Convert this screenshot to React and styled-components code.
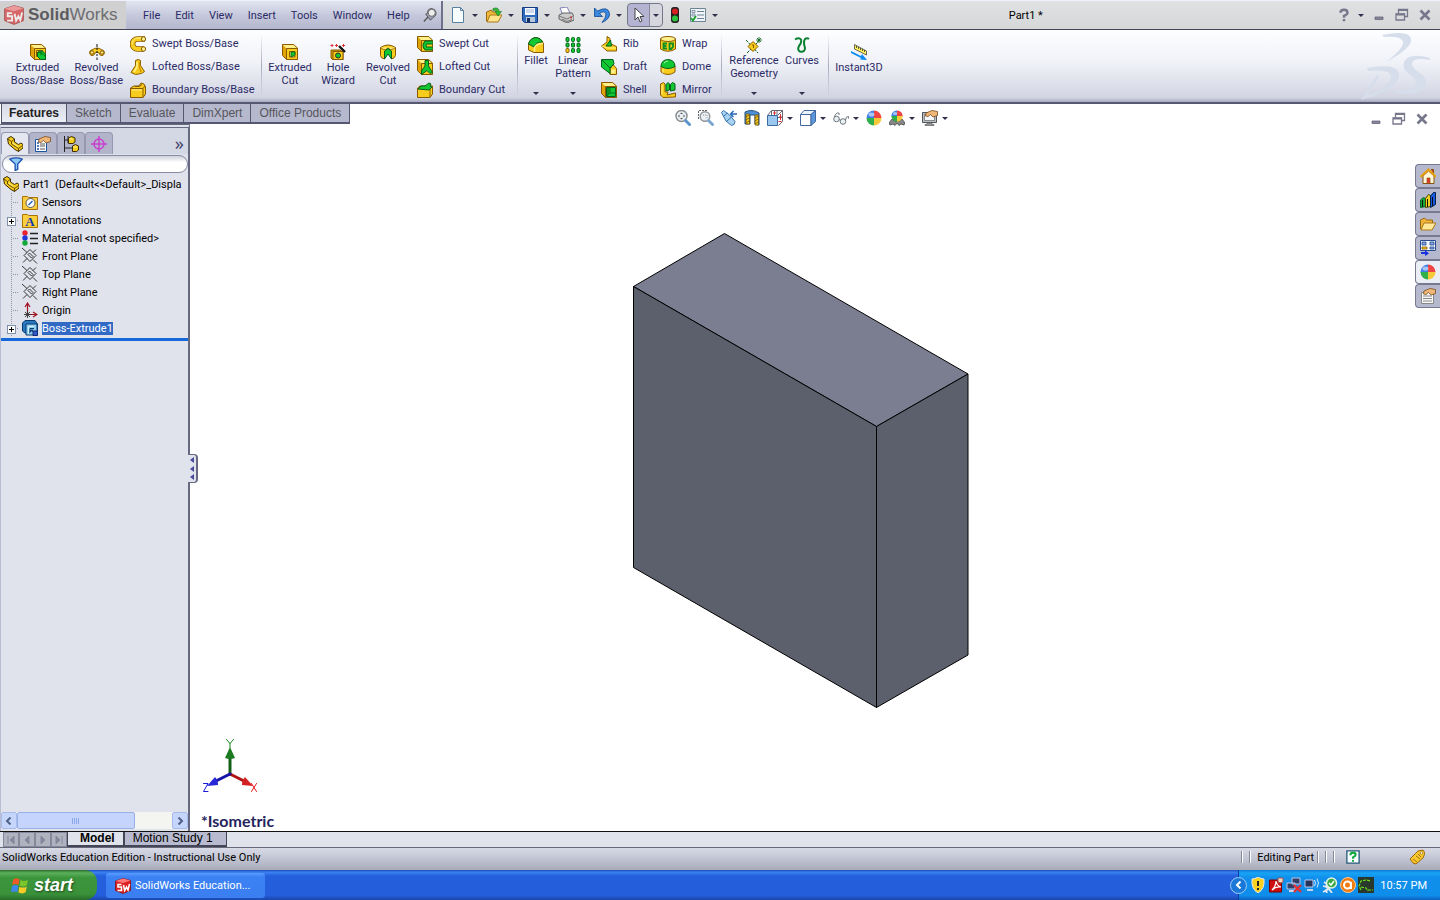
import React from 'react';
import styled, { createGlobalStyle, css } from 'styled-components';

const GlobalStyle = createGlobalStyle`
  * { box-sizing: border-box; }
  body {
    margin: 0;
    background: #fff;
    font-family: Tahoma, Roboto, sans-serif;
    font-size: 11px;
    line-height: 13px;
    color: #000;
  }
  button, input {
    font: inherit;
    color: inherit;
    padding: 0;
    margin: 0;
    border: none;
    background: none;
  }
  button { cursor: pointer; white-space: nowrap; }
  svg { display: block; flex: none; }
`

const Y = '#f8cc1c';
const L = '#fff08a';
const O = '#8a5a00';
const G = '#12c832';
const D = '#04601a';

const goldBox = (
  <>
    <path d="M.5.500h11l4 3.500v11.500H4.500l-4-4z" fill="#e0a408" stroke={O} />
    <path d="M1 1h10.500l3 3H4z" fill={L} />
    <path d="M4.500 4.500h11v11H4.500z" fill={Y} stroke={O} />
  </>
);

const sphere = (
  <>
    <path d="M8 8V0.500A7.500 7.500 0 0 0 .5 8z" fill="#3f7fe8" />
    <path d="M8 8V.5A7.500 7.500 0 0 1 15.500 8z" fill="#ee4444" />
    <path d="M8 8H.5A7.500 7.500 0 0 0 8 15.500z" fill="#2fb04a" />
    <path d="M8 8h7.500A7.500 7.500 0 0 1 8 15.500z" fill="#f6c93a" />
    <ellipse cx="5.500" cy="4.500" rx="3" ry="2" fill="#fff" opacity=".55" />
  </>
);

const hand = (
  <path d="M4 3l6-2.500 5.500 1v4L11 7 8.500 4.500 6 6.500 3.500 6z" fill="#f0b878" stroke="#7a4c20" strokeWidth=".8" />
);

const glyphs = {
  extrude: (
    <>
      {goldBox}
      <path d="M6.500 6.500h6v6h-6z" fill="none" stroke={O} />
      <path d="M7.500 8.500l2-1.500h3l3 3v5.500h-5l-3-3z" fill={G} stroke={D} />
      <path d="M7.500 8.500h3.500l4 3.500M11 8.500v3" fill="none" stroke={D} strokeWidth=".8" />
    </>
  ),
  revolve: (
    <>
      <path d="M8 0v3M8 13.500V16" stroke="#111" />
      <path d="M3 11.500C-.5 11 0 6 3 6q5-4 10 0c3 0 3.500 5 0 5.500q-2 .5-3-2.500-2-1.500-4 0-1 3-3 2.500z" fill={Y} stroke={O} />
      <circle cx="3" cy="8.500" r="1.700" fill={L} stroke={O} />
      <circle cx="13" cy="8.500" r="1.700" fill={L} stroke={O} />
      <path d="M8 4v2M8 7v2M8 10v2" stroke="#111" />
    </>
  ),
  sweep: (
    <>
      <path d="M15 3H7.500a5 5 0 0 0 0 10H14" fill="none" stroke={O} strokeWidth="5.600" />
      <path d="M14 3H7.500a5 5 0 0 0 0 10H14" fill="none" stroke={Y} strokeWidth="4" />
      <path d="M13 2H7.500a6 6 0 0 0-5.500 6" fill="none" stroke={L} />
      <circle cx="13.500" cy="3" r="2.200" fill={L} stroke={O} />
      <circle cx="13.500" cy="13" r="2.200" fill={L} stroke={O} />
    </>
  ),
  loft: (
    <>
      <path d="M5.500 1.500q3-2 5 0v5l4 6-3 2-6 1L1 13.500l4.500-7z" fill={Y} stroke={O} />
      <path d="M7 3v5l-3 5" fill="none" stroke={L} strokeWidth="1.500" />
      <path d="M9.500 3v5l1.500 5" fill="none" stroke="#cf9400" strokeWidth="1.500" />
    </>
  ),
  boundary: (
    <>
      <path d="M.5 6L4 4h5l2-3 3 1 1.500 3v7L13 15.500H.5z" fill={Y} stroke={O} />
      <path d="M1 6.500h12l2-2.500M13 6.500v9M5 4.500q5 1 7-2" fill="none" stroke={O} />
      <path d="M2 8h10" stroke={L} />
    </>
  ),
  extrudeCut: (
    <>
      {goldBox}
      <path d="M7.500 7.500h5.500v5.500H7.500z" fill={L} stroke={O} />
      <path d="M9 8h4v3L9 13z" fill={G} stroke={D} strokeWidth=".8" />
    </>
  ),
  hole: (
    <>
      <path d="M1 6h9l3 2v8H3L1 14z" fill="#d89a00" stroke={O} />
      <path d="M3 7.500h10v8H3z" fill={Y} stroke={O} />
      <circle cx="8" cy="11.500" r="2.500" fill={G} stroke="#333" />
      <path d="M9 2l6 6" stroke="#111" strokeWidth="2.400" />
      <path d="M2 0v3M.5 1.500h3M6.500 0v3M5 1.500h3M13.500 0v3M12 1.500h3" stroke="#e02020" strokeWidth=".9" />
    </>
  ),
  revolveCut: (
    <>
      <path d="M.5 3.500Q8-1.500 15.500 3.500v8q-1 3-4 3.500V9L8 5 4.500 9v6q-4-1-4-3.500z" fill={Y} stroke={O} />
      <path d="M.5 3.500Q3 6 5.500 5.500L8 4l2.500 1.500q3 0 5-2" fill={L} stroke={O} strokeWidth=".8" />
      <path d="M4.500 15V7L8 4.500l3.500 2.500v8L8 10z" fill={G} stroke={D} />
    </>
  ),
  sweepCut: (
    <>
      {goldBox}
      <path d="M15.500 6.500H9q-3 3 0 6h6.500" fill="none" stroke={D} strokeWidth="4" />
      <path d="M15.500 6.500H9q-3 3 0 6h6.500" fill="none" stroke={G} strokeWidth="2.200" />
    </>
  ),
  loftCut: (
    <>
      {goldBox}
      <path d="M8 1.500h3.500V7l4 6.500-2.500 1-3-3-5.500 4V12l3.500-5z" fill={G} stroke={D} />
    </>
  ),
  boundaryCut: (
    <>
      <path d="M.5 6L3 4h12.500v8L13 15.500H.5z" fill={Y} stroke={O} />
      <path d="M13 7v8" stroke={O} />
      <path d="M1 7l3-3h4l4-3 2 1-1 2 2 1-3 3z" fill={G} stroke={D} />
    </>
  ),
  fillet: (
    <>
      <path d="M.5 7v6L6 15.500h9.500V7q-1-5-7-6.500Q2 1 .5 7z" fill={Y} stroke={O} />
      <path d="M.5 7Q2 1 8 .5q5 .5 6.500 4.500Q8 5 6 10z" fill={G} stroke={D} />
      <path d="M6.500 15V10.500q2-4 8.500-4" fill="none" stroke={L} strokeWidth="1.500" />
    </>
  ),
  pattern: (
    <>
      {[1, 6.500, 12].map(x => [0.500, 6, 11.500].map(y => (
        <rect key={`${x}-${y}`} x={x} y={y} width="3" height="4" rx="1"
          fill={x === 1 && y > 11 ? Y : G} stroke={x === 1 && y > 11 ? O : D} />
      )))}
    </>
  ),
  rib: (
    <>
      <path d="M6 .5l3 2v5l6.500 3v4.500H6L.5 10 6 6z" fill={Y} stroke={O} />
      <path d="M5 10L9.500 4l1 6z" fill={G} stroke={D} />
      <path d="M1 10l5 2h9" fill="none" stroke={L} />
    </>
  ),
  draft: (
    <>
      <path d="M9 9.500l3-4 3.500 4v6H9z" fill={Y} stroke={O} />
      <path d="M.5.500H12l1 4-4 5v5L.5 8z" fill={G} stroke={D} />
      <path d="M1 1l8 8 4-4" fill="none" stroke={D} />
      <path d="M10 10.500h4.500v4H10z" fill={L} />
    </>
  ),
  shell: (
    <>
      {goldBox}
      <path d="M5.500 5.500h9v9h-9z" fill={G} stroke={D} />
      <path d="M6 14l3-3h5.500M9 11V6" fill="none" stroke={D} strokeWidth=".8" />
      <path d="M6 6h3v5l-3 3z" fill="#0a9022" />
    </>
  ),
  wrap: (
    <>
      <path d="M.5 3v10Q8 17.500 15.500 13V3z" fill={Y} stroke={O} />
      <ellipse cx="8" cy="3" rx="7.500" ry="2.500" fill={L} stroke={O} />
      <path d="M7 7.500H3.500v5H7M3.500 10h3M9.500 13V7.500H13V11l-2 2z" fill="none" stroke="#0a9022" strokeWidth="1.800" />
    </>
  ),
  dome: (
    <>
      <path d="M1 7v6q7 5 14 0V7z" fill={Y} stroke={O} />
      <path d="M1 7.500q0-6.500 7-7Q15 1 15 7.500q-7 4-14 0z" fill={G} stroke={D} />
      <path d="M4 4q2-2 4-2" stroke="#afa" fill="none" />
      <path d="M3 10v4" stroke={L} />
    </>
  ),
  mirror: (
    <>
      <path d="M.5 2l3-1.500L5 2v8h3l-1 3 8.500-2v4L3 15.500.5 13z" fill={Y} stroke={O} />
      <path d="M6 2.500l2-2 1.500 1.500v6L6 9zM10.500 2.500l2-2L15 2v6l-4.500 1z" fill={G} stroke={D} />
      <path d="M2 3v9" stroke={L} />
    </>
  ),
  refGeometry: (
    <>
      <path d="M0 3l12 13M1 16L13 4" stroke="#086018" strokeDasharray="3 1" />
      <path d="M13 0v6M10 3h6M11 1l4 4M15 1l-4 4" stroke="#086018" strokeWidth=".8" />
      <path d="M7 4.500l5 5-5 5-5-5z" fill={Y} stroke={O} />
      <path d="M6 8h1.500v3" stroke={O} fill="none" />
    </>
  ),
  curves: <path d="M1 2.500q4-2.500 6 0 1 3-2 6.500-2 4 1 5.500 5 1 5-3.500-2-6 0-9 2-1.500 4 0" fill="none" stroke="#078030" strokeWidth="2" />,
  instant: (
    <>
      <path d="M3.500 .5l12 6.500v4l-12-6z" fill="#fff25a" stroke="#444" strokeWidth=".8" />
      <path d="M5.500 2v2M7.500 3v2M9.500 4v2M11.500 5v2M13.500 6v2" stroke="#333" strokeWidth=".8" />
      <path d="M0 7l10 5 1-2 5 6-7-.5 1-1.500L0 9z" fill="#0a8cf0" />
    </>
  ),
  newDoc: <path d="M2.500.5h8l3 3v12h-11zM10.500.5v3h3" fill="#f7fcff" stroke="#5880a0" />,
  open: (
    <>
      <path d="M.5 14V5l5-2 1 2h5v9z" fill="#f0b83a" stroke="#9a6810" />
      <path d="M1 15l3-7h12l-4 7z" fill="#ffe38a" stroke="#a87818" />
      <path d="M7 1.500q6-2 6 3h2.500L12 9 9 4.500h2q-1-2-4-1z" fill="#30b838" stroke="#187818" strokeWidth=".6" />
    </>
  ),
  save: (
    <>
      <path d="M.5.5h15v15h-13l-2-2z" fill="#2f6cc0" stroke="#143a80" />
      <path d="M3 1h10v7H3z" fill="#f4f8ff" />
      <path d="M4 3h8M4 5h8" stroke="#a8b8d8" />
      <path d="M4 10h9v5H4z" fill="#b8c4d8" />
      <path d="M5 11h3v4H5z" fill="#16305e" />
    </>
  ),
  print: (
    <>
      <path d="M2 1l7-1 3 6-7 2z" fill="#fff" stroke="#66a" strokeWidth=".8" />
      <path d="M1 8l4-2 9 0 2 3v4l-7 3-8-4z" fill="#ccc" stroke="#555" strokeWidth=".9" />
      <path d="M1 9l8 3 6-3M4 12l5 2.500 5-2" fill="none" stroke="#777" />
      <circle cx="13" cy="10.500" r="1" fill="#d03030" />
    </>
  ),
  undo: <path d="M.5 1v8.500h8L5.500 6.500q5-3.500 6.500.5 0 4-4 8.500Q16 12 15.500 6.500 14-1.500 3.500 4z" fill="#3a88e0" stroke="#10468c" strokeWidth=".8" />,
  cursor: <path d="M4 1v12l3-3 2 5 2-1-2-4.500h4z" fill="#fff" stroke="#444" />,
  light: (
    <>
      <rect x="4" y="0" width="8" height="16" rx="3" fill="#222" />
      <circle cx="8" cy="4.500" r="3" fill="#d82020" />
      <circle cx="8" cy="11.500" r="3" fill="#2cc43c" />
    </>
  ),
  options: (
    <>
      <path d="M.5 1.500h15v13H.5z" fill="#eef4f8" stroke="#6c8494" />
      <path d="M7 4.500h7M7 8h7M7 11.500h7" stroke="#6c8494" />
      <path d="M2 3.500h3v2H2zM2 7h3v2H2z" fill="none" stroke="#6c8494" strokeWidth=".8" />
      <path d="M1 11l2 2.500L6 9" fill="none" stroke="#18a028" strokeWidth="1.800" />
    </>
  ),
  pin: (
    <>
      <path d="M1 15.500l5-5.500" stroke="#555" strokeWidth="1.500" />
      <path d="M3 7l5.500 7 3-3q4-2 3.500-6-1-4.500-6-4.500Q5 1 5 6z" fill="#9a9ab0" stroke="#555" />
      <circle cx="10" cy="5.500" r="4" fill="#eee" stroke="#666" />
    </>
  ),
  zoomFit: (
    <>
      <circle cx="6.500" cy="6" r="5.500" fill="#e8eef2" stroke="#858b90" strokeWidth="1.400" />
      <path d="M6.500 2.500l1.500 1.500H5zM6.500 9.500L8 8H5zM3 6l1.500-1.500v3zM10 6L8.500 4.500v3z" fill="#555" />
      <path d="M10.500 10.500l4 4" stroke="#5b95cc" strokeWidth="3" strokeLinecap="round" />
    </>
  ),
  zoomArea: (
    <>
      <path d="M.5 9V.5H10" fill="none" stroke="#666" strokeDasharray="2 1" />
      <circle cx="7" cy="6.500" r="4.800" fill="#e8eef2" stroke="#90969a" strokeWidth="1.400" />
      <path d="M5 5h4v3" fill="none" stroke="#999" strokeDasharray="1 1" />
      <path d="M10.500 10.500l4 4" stroke="#7aa6d0" strokeWidth="3" strokeLinecap="round" />
    </>
  ),
  prevView: (
    <>
      <path d="M.5 2.500l2-2 6 4.500 5.500 6.500q0 3.500-3.500 4L5 11z" fill="#a8d4f4" stroke="#3a70a8" />
      <path d="M3 6l3.500-3M6 11l4.500-4" stroke="#3a70a8" />
      <path d="M16 4h-5.500M12.500 1L9.500 4l3 3" fill="none" stroke="#2468b8" strokeWidth="1.400" />
    </>
  ),
  section: (
    <>
      <path d="M1 2q7-3.500 14 1v12q-2 0-4-1V5H6v9H1z" fill="#4c90d8" stroke="#24507c" />
      <path d="M2 4h3.500v10H2zM11 5h3.500v10H11z" fill={Y} stroke="#6a5010" strokeWidth=".8" />
      <path d="M2 7l3-2M2 10l3-2M2 13l3-2M11 8l3-2M11 11l3-2M11 14l3-2" stroke="#6a5010" strokeWidth=".8" />
    </>
  ),
  orient: (
    <>
      <path d="M4.500.5h11v11l-4 4M4.500.5l-4 5M15.500.5L11 5M4.500 1v4M10 .5V5M11 7.500h4" fill="none" stroke="#556" strokeWidth=".9" />
      <path d="M.5 5.500h10v10H.5z" fill="#9cc8f0" stroke="#3a6ca0" />
      <path d="M7.500 1v4M6 3h3M13.500 4v6M12 7h3M11.500 11.500h3" stroke="#d83030" />
    </>
  ),
  display: (
    <>
      <path d="M.5 4.500L4 .5h11.500L11 4.500z" fill="#eaf4fc" stroke="#4468a0" />
      <path d="M.5 4.500H11v11H.5z" fill="#fff" stroke="#4468a0" />
      <path d="M11 4.500l4.500-4v11l-4.500 4z" fill="#5c98dc" stroke="#4468a0" />
    </>
  ),
  glasses: (
    <>
      <circle cx="3.500" cy="9" r="2.800" fill="#e8f0f4" stroke="#707880" />
      <circle cx="10" cy="11.500" r="2.800" fill="#e8f0f4" stroke="#707880" />
      <path d="M6 9.500l2 1M1.500 7q1-4.500 4.500-4v2M12.500 10q.5-4 3-3.500v2" fill="none" stroke="#707880" />
    </>
  ),
  appearance: sphere,
  scene: (
    <>
      <path d="M0 13l3-4 3 2 4 0 3-2 3 4-1 2-3-1-2 1.500-2-2.500-2 2.500L4 14l-3 1z" fill="#888" stroke="#444" strokeWidth=".8" />
      <g transform="translate(2 0) scale(.75)">{sphere}</g>
    </>
  ),
  viewSettings: (
    <>
      <path d="M.5 2.500h14v10H.5z" fill="#b8bec6" stroke="#555" />
      <path d="M2.500 4.500h10v6h-10z" fill="#f4f8fc" stroke="#666" strokeWidth=".7" />
      <path d="M5 13h5v1.500h2v1H3v-1h2z" fill="#999" stroke="#666" strokeWidth=".7" />
      {hand}
    </>
  ),
  part: (
    <>
      <path d="M.5 2.500L4 .5l3.500 2.500v3l4 2.500L14 7l2 1.500V12l-4.500 3.500L8 13.500 1.500 8z" fill={Y} stroke="#3c2c00" />
      <path d="M1 3l3.500 2.500L7.500 3M4.500 5.500V8l7 4.500 4-3M11.500 12.500v3" fill="none" stroke="#3c2c00" strokeWidth=".8" />
      <path d="M5.500 7l5 3.500" stroke={L} />
    </>
  ),
  property: (
    <>
      <path d="M.5 3.500h11v12H.5z" fill="#fff" stroke="#1c54a0" />
      <path d="M2 7h2M2 10h2M2 13h2" stroke="#1c54a0" strokeWidth="1.500" />
      <path d="M5 8h5M5 10h5M5 13h5" stroke="#555" />
      {hand}
    </>
  ),
  config: (
    <>
      <path d="M1.500 0v16M1.500 4H5M1.500 12H9M5 0v7" fill="none" stroke="#222" />
      <path d="M5.500 2l3-1.500 3.500 1.500v4l-2 1.500H5.500zM9.500 10l3-1.500 3 1.500v4l-2 1.500h-4z" fill={Y} stroke="#3c2c00" />
      <path d="M6 3h4M10 11h4" stroke={L} />
    </>
  ),
  dimx: (
    <>
      <circle cx="8" cy="8" r="5" fill="none" stroke="#c840d0" strokeWidth="1.500" />
      <path d="M8 0v16M0 8h16" stroke="#c840d0" strokeWidth="1.500" />
    </>
  ),
  filter: <path d="M1 2.500q7-3 14 0L10 8v6l-3 1.500V8z" fill="#8cc8f4" stroke="#1c50b0" strokeWidth="1.500" />,
  sensors: (
    <>
      <path d="M.5 2.500h5l1 1h9v12H.5z" fill="#f8cc3c" stroke="#a87408" />
      <circle cx="8.500" cy="9" r="4.500" fill="#fff" stroke="#555" />
      <path d="M6.500 11l4-4" stroke="#2060c0" strokeWidth="1.500" />
    </>
  ),
  annotations: (
    <>
      <path d="M.5 2.500h5l1 1h9v12H.5z" fill="#fccf3c" stroke="#a87408" />
      <text x="8" y="13.500" textAnchor="middle" fontFamily="Liberation Serif, serif" fontWeight="bold" fontSize="13" fill="#1038b0">A</text>
    </>
  ),
  material: (
    <>
      <path d="M8 3.500h8M8 8.500h8M8 13.500h8" stroke="#222" strokeWidth="1.300" />
      <circle cx="3" cy="3" r="2.700" fill="#e82030" />
      <circle cx="3" cy="8" r="2.700" fill="#2038d8" />
      <circle cx="3" cy="13" r="2.700" fill="#10a838" />
    </>
  ),
  plane: (
    <path d="M8 1.500l6 6-6 6-6-6zM0 0l5 4.500M11 11.500l4 4M1 14.500l4-4M11 4.500l3-3M7.500 5l3.500 3.500-1.500 1.500L6 6.500z" fill="none" stroke="#222" strokeWidth=".9" />
  ),
  origin: (
    <>
      <path d="M5.500 12V2M3 5l2.500-4L8 5M7 12.500h7M11 10l4 2.500-4 2.500" fill="none" stroke="#a01020" strokeWidth="1.200" />
      <path d="M3 10l5 5M8 10l-5 5M5.500 9v7M2 12.500h7" stroke="#333" strokeWidth=".9" />
    </>
  ),
  boss: (
    <>
      <path d="M.5 3L3 .5h10L15.500 4v9H3L.5 11z" fill="#2a78c0" stroke="#0a3a70" />
      <path d="M4 4h11v11H4z" fill="#8ccdf0" stroke="#0a3a70" />
      <path d="M6.500 14V6.500H12" fill="none" stroke="#d8f0fc" />
      <path d="M8 8.500V12l2-2 3 4M8 8.500h4" fill="none" stroke="#0a3a70" strokeWidth="1.200" />
      <path d="M11 11h4.500v4.500H11z" fill="#3458d0" stroke="#102a70" />
    </>
  ),
  home: (
    <>
      <path d="M3 8v7.500h11V8L8.500 3z" fill="#fff8d8" stroke="#85520a" />
      <path d="M11 1.500h2.500V6" fill="#d83a2a" stroke="#85520a" />
      <path d="M.5 9l8-7.500 7.500 7.500" fill="none" stroke="#e8a010" strokeWidth="2" />
      <path d="M7 10h3v5.500H7z" fill="#ea3a30" stroke="#85520a" strokeWidth=".7" />
    </>
  ),
  library: (
    <>
      <path d="M.5 8l3-2.500 2 1v8l-5 1z" fill="#18a838" stroke="#062" />
      <path d="M5.500 6.500l3-4 2 1v11l-5 1z" fill="#f4d020" stroke="#440" />
      <path d="M10.500 4l3-3.500h2v12l-5 3z" fill="#1858e0" stroke="#024" />
      <path d="M2.500 8v7M7.500 7v8M12.500 5v9" stroke="#111" />
    </>
  ),
  folder: (
    <>
      <path d="M.5 13V4l4-2 2 2h6v9z" fill="#f0b43c" stroke="#9a6810" />
      <path d="M1 14l3-7h12l-4 7z" fill="#ffe89a" stroke="#a87818" />
    </>
  ),
  palette: (
    <>
      <path d="M.5.5h15v10H.5z" fill="#f4f8ff" stroke="#2c4c90" />
      <path d="M2 2h4v3H2zM10 2h4v3h-4zM10 7h4v2h-4z" fill="#7ca4e0" stroke="#2c4c90" strokeWidth=".8" />
      <path d="M2 7h5v2H2z" fill={Y} stroke={O} strokeWidth=".8" />
      <path d="M1 12h4v-2l4 3.500L5 16v-2H1z" fill="#1830e0" />
    </>
  ),
  custom: (
    <>
      <path d="M1.500 4.500h12v11h-12z" fill="#f8f8f8" stroke="#888" />
      <path d="M3 8h9M3 10.500h9M3 13h9" stroke="#888" />
      {hand}
    </>
  ),
  sw: (
    <>
      <path d="M.5 3L8 .5l7.500 2v10L8 15.500l-7.500-3z" fill="#d22" stroke="#800" strokeWidth=".7" />
      <path d="M.5 3L8 .5l7.500 2L8 5z" fill="#f77" />
      <path d="M6.500 6.500H3V9h3.500v3.500H2.500M8.500 7l1.200 5.500L11.500 9l1.500 3L14.500 6" fill="none" stroke="#fff" strokeWidth="1.500" />
    </>
  ),
  helpBox: (
    <>
      <path d="M1 1h14v14H1z" fill="#f4fcff" stroke="#285878" strokeWidth="1.500" />
      <path d="M5 6q0-3 3-3t3 2.500Q11 7 8 8.500V10M8 11.500v2" fill="none" stroke="#10a838" strokeWidth="2.300" />
    </>
  ),
  tag: (
    <>
      <path d="M1 10l8-8 5-1 2 3-2 5-7 6-3-1z" fill="#fac830" stroke="#9a6808" />
      <path d="M4 10l4 3M7 7l4 3M9 5l3 3" stroke="#9a6808" strokeWidth=".9" />
      <circle cx="12.500" cy="4" r="1.300" fill="#fff" stroke="#9a6808" strokeWidth=".7" />
    </>
  ),
  shield: (
    <>
      <path d="M8 0q3 2 6 2 1 10-6 14Q1 12 2 2q3 0 6-2z" fill="#f8d020" stroke="#e8e8e8" />
      <path d="M8 4v5M8 11v2" stroke="#222" strokeWidth="2" />
    </>
  ),
  acrobat: (
    <>
      <path d="M1.500 3h12v12h-12z" fill="#d01010" stroke="#700" />
      <path d="M4 13q4-4 4-9 1 5 5 6-5-1-9 3z" fill="none" stroke="#fff" strokeWidth="1.200" />
      <path d="M10 1h5v4l-2 1-3-1z" fill="#f4d8c0" stroke="#955" />
    </>
  ),
  netOff: (
    <>
      <path d="M6 1h8v6H6zM1 6h8v6H1z" fill="#34406c" stroke="#b8c8e8" />
      <path d="M3 14h5" stroke="#c8d4ec" strokeWidth="2" />
      <path d="M8 8l7 7M15 8l-7 7" stroke="#e83030" strokeWidth="2.400" />
    </>
  ),
  wireless: (
    <>
      <path d="M1 3h8v7H1z" fill="#26345c" stroke="#b8c8e8" />
      <path d="M3 13h6" stroke="#c8d4ec" strokeWidth="2" />
      <path d="M10.500 3q2 3 0 6M13 1.500q3 4.500 0 9" fill="none" stroke="#d8ecff" />
    </>
  ),
  update: (
    <>
      <path d="M2 5l3 2-1 3 3 1-3 2 1 3M1 9l4 1M1 15l6-3 3 4" fill="none" stroke="#e4e8ec" strokeWidth="1.800" />
      <circle cx="9.500" cy="6" r="5" fill="#38a840" stroke="#e4f4e4" strokeWidth="1.500" />
      <path d="M7 6l2 2 3-4" fill="none" stroke="#fff" strokeWidth="1.600" />
    </>
  ),
  avast: (
    <>
      <circle cx="8" cy="8" r="7.500" fill="#f07c10" stroke="#ffc890" />
      <circle cx="7.500" cy="8" r="3.500" fill="none" stroke="#fff" strokeWidth="2" />
      <path d="M11 5v7" stroke="#fff" strokeWidth="2" />
    </>
  ),
  trace: (
    <>
      <path d="M0 0h16v16H0z" fill="#28382c" />
      <path d="M3 13l-2-4 2-5 5-1 5 1M3 10l5 1 2 3M10 13h5" fill="none" stroke="#70e020" strokeWidth="1.200" strokeDasharray="3 1" />
    </>
  ),
  flag: (
    <>
      <path d="M2 3q3-2 5.500 0L6.500 8Q4 6 1 8z" fill="#f05a28" />
      <path d="M8.500 3.500q3 2 6.500 0l-1 5q-3 1.500-6.500 0z" fill="#7cc62c" />
      <path d="M1 9q3-2 5.500 0l-1 5.500Q3 13 0 14.500z" fill="#3c88f0" />
      <path d="M7.500 9.500q3 1.500 6.500 0l-1 5q-3 2-6.500 0z" fill="#fccb28" />
    </>
  ),
  help: <path d="M4 5.500Q4 2 8 2t4 3.500Q12 7.500 8 9v2M8 12.500V15" fill="none" stroke="#77778c" strokeWidth="2.800" />,
  min: <path d="M4 10h8v2.500H4z" fill="#88889c" stroke="#66667a" strokeWidth=".8" />,
  restore: (
    <>
      <path d="M4.500 6V2.500h9v7H11" fill="none" stroke="#77778c" strokeWidth="1.300" />
      <path d="M4 3h10" stroke="#77778c" strokeWidth="2" />
      <path d="M2 7h8.500v6H2z" fill="none" stroke="#77778c" strokeWidth="1.300" />
      <path d="M2 7.500h9" stroke="#77778c" strokeWidth="2" />
    </>
  ),
  close: <path d="M3.500 3.500l9 9M12.500 3.500l-9 9" stroke="#77778c" strokeWidth="2.600" />,
};

function Icon({ name, size = 16 }) {
  return <svg width={size} height={size} viewBox="0 0 16 16" aria-hidden="true">{glyphs[name]}</svg>;
}

const Caret = styled.span`
  width: 0;
  height: 0;
  border: 3px solid transparent;
  border-top-color: #30304c;
  border-bottom: none;
`

const Page = styled.div`
  display: flex;
  flex-direction: column;
  min-height: 100vh;
`

const TitleBar = styled.header`
  display: flex;
  height: 30px;
  border-top: 1px solid #eef0fc;
  border-bottom: 1px solid #444458;
  background: linear-gradient(#e0e1e3, #d6d7d9);
`

const Brand = styled.div`
  display: flex;
  align-items: center;
  gap: 4px;
  width: 126px;
  padding-left: 4px;
  background: #d0d0d1;
  color: #6c6c70;
  font-family: 'Liberation Sans', Arial, sans-serif;
  font-size: 17px;
  line-height: 20px;
  b { color: #5c5c60; }
  svg { opacity: 0.6; }
`

const MenuBar = styled.nav`
  display: flex;
  align-items: center;
  padding: 0 4px 0 10px;
  border-right: 2px solid #70708c;
  background: linear-gradient(#e2e4f0, #c6c9dc 50%, #b4b7cd);
  button {
    height: 28px;
    padding: 0 8px 0 7px;
    color: #2b2b66;
  }
  svg { margin-left: 5px; }
`

const QuickBar = styled.div`
  display: flex;
  align-items: center;
  padding-left: 4px;
`

const QuickButton = styled.button`
  display: flex;
  align-items: center;
  justify-content: ${p => (p.$plain ? 'center' : 'flex-start')};
  gap: 6px;
  width: ${p => (p.$plain ? 24 : 36)}px;
  height: 24px;
  padding-left: ${p => (p.$plain ? 0 : 3)}px;
  ${p => p.$active && css`
    border: 1px solid #77778c;
    border-radius: 4px;
    background: linear-gradient(90deg, #b4b4d2 21px, #88889c 21px, #88889c 22px, #d6d7de 22px);
  `}
`

const DocTitle = styled.div`
  flex: 1;
  display: flex;
  align-items: center;
  justify-content: center;
`

const WindowButtons = styled.div`
  display: flex;
  align-items: center;
  gap: 7px;
  padding: 0 ${p => p.$pad || 7}px 0 8px;
  button { display: flex; }
`

const RibbonBar = styled.section`
  display: flex;
  height: 74px;
  padding-left: 8px;
  border-bottom: 2px solid #555870;
  background: linear-gradient(#fdfeff, #f0f2f8 45%, #d2d4e2 94%, #a8abc0);
`

const Group = styled.div`
  display: flex;
  & + &::before {
    content: '';
    width: 1px;
    margin: 4px 5px;
    background: linear-gradient(transparent, #a8abc0 50%, transparent);
  }
`

const BigButton = styled.button`
  display: flex;
  flex-direction: column;
  align-items: center;
  width: ${p => p.$w}px;
  padding: ${p => (p.$menu ? '7px 0 7px' : '14px 0 0')};
  color: #2b2b66;
  white-space: pre-line;
  svg { margin-bottom: 1px; }
  ${Caret} { margin-top: auto; }
`

const SmallColumn = styled.div`
  display: flex;
  flex-direction: column;
  width: ${p => p.$w}px;
  padding: 2px 0 0 4px;
`

const SmallButton = styled.button`
  display: flex;
  align-items: center;
  gap: 6px;
  height: 23px;
  color: #2b2b66;
`

const DsLogo = styled.svg`
  margin: 2px 8px 0 auto;
`

const TabRow = styled.div`
  display: flex;
  align-items: flex-start;
  height: 20px;
`

const FeatureTabs = styled.div`
  display: flex;
  padding-left: 1px;
  font-family: 'Liberation Sans', Arial, sans-serif;
  font-size: 12px;
`

const FeatureTab = styled.button`
  height: 20px;
  padding: 0 ${p => (p.$active ? 7 : 8)}px;
  border: 1px solid #555870;
  border-width: 0 1px 2px;
  margin-left: -1px;
  background: ${p => (p.$active ? 'linear-gradient(#d8dae6, #eceef5)' : '#b6b9cd')};
  color: ${p => (p.$active ? '#222' : '#55555c')};
  font-weight: ${p => (p.$active ? 'bold' : 'normal')};
  &:first-child { margin-left: 0; }
`

const ViewTools = styled.div`
  flex: 1;
  display: flex;
  justify-content: center;
  padding: 6px 80px 0 0;
`

const ViewButton = styled.button`
  display: flex;
  align-items: center;
  gap: 4px;
  width: ${p => (p.$menu ? 33 : 23)}px;
  height: 16px;
`

const DocButtons = styled(WindowButtons)`
  padding-top: 7px;
`

const Workspace = styled.main`
  flex: 1;
  display: flex;
`

const SidePanel = styled.aside`
  position: relative;
  z-index: 1;
  display: flex;
  flex-direction: column;
  width: 190px;
  border-left: 1px solid #b8bcd0;
  border-right: 2px solid #66697f;
  border-top: 4px double #666a80;
  background: #e0e3ec;
`

const PanelTabs = styled.div`
  display: flex;
  height: 26px;
  padding: 4px 4px 0 0;
  background: #d4d7e4;
`

const PanelTab = styled.button`
  display: flex;
  align-items: center;
  justify-content: center;
  width: 28px;
  border: 1px solid #9598b0;
  border-bottom: none;
  border-radius: 4px 4px 0 0;
  background: ${p => (p.$active ? '#e4e6f0' : '#b2b5ca')};
`

const More = styled.button`
  margin-left: auto;
  font-family: 'Noto Sans', sans-serif;
  font-size: 18px;
  color: #44446a;
`

const FilterBox = styled.label`
  display: flex;
  align-items: center;
  gap: 4px;
  height: 18px;
  margin: 1px 0 2px 1px;
  padding-left: 6px;
  border: 1px solid #888ba4;
  border-radius: 9px;
  background: linear-gradient(#cfd1dc, #fff 40%);
  input { width: 100%; outline: none; }
`

const Tree = styled.ul`
  list-style: none;
  margin: 0;
  padding: 0 0 1px;
  border-bottom: 3px solid #1668d8;
`

const TreeRoot = styled.li`
  display: flex;
  align-items: center;
  gap: 4px;
  height: 18px;
  padding-left: 2px;
  white-space: pre;
`

const TreeItem = styled.li`
  display: flex;
  align-items: center;
  gap: 4px;
  height: 18px;
  white-space: nowrap;
`

const Branch = styled.span`
  position: relative;
  width: 17px;
  height: 18px;
  background:
    repeating-linear-gradient(#9094a8 0 1px, transparent 1px 2px) 10px 0 / 1px 18px no-repeat,
    repeating-linear-gradient(90deg, #9094a8 0 1px, transparent 1px 2px) 12px 9px / 7px 1px no-repeat;
`

const Expander = styled.button`
  position: absolute;
  left: 6px;
  top: 6px;
  width: 9px;
  height: 9px;
  border: 1px solid #8090a8;
  background:
    linear-gradient(#000, #000) center / 5px 1px no-repeat,
    linear-gradient(#000, #000) center / 1px 5px no-repeat,
    #fff;
`

const TreeLabel = styled.span`
  ${p => p.$selected && css`
    background: #316ac5;
    color: #fff;
  `}
`

const ScrollBar = styled.div`
  display: flex;
  height: 17px;
  margin: auto 0 2px;
  background: #f4f4f0;
`

const ScrollButton = styled.button`
  display: flex;
  align-items: center;
  justify-content: center;
  width: 16px;
  border: 1px solid #a8bcec;
  border-radius: 2px;
  background: #c6d5fc;
`

const ScrollThumb = styled.div`
  width: 118px;
  margin-right: auto;
  border: 1px solid #98b0e8;
  border-radius: 2px;
  background:
    repeating-linear-gradient(90deg, #8ca8e8 0 1px, transparent 1px 2px) center / 8px 6px no-repeat,
    #c4d4fc;
`

const PanelHandle = styled.button`
  position: absolute;
  left: 187px;
  top: 326px;
  display: flex;
  flex-direction: column;
  align-items: center;
  justify-content: space-evenly;
  width: 10px;
  height: 29px;
  border: 1px solid #66697f;
  border-width: 1px 2px 1px 0;
  border-radius: 0 4px 4px 0;
  background: #e0e3ec;
  i {
    border: 3px solid transparent;
    border-right: 4px solid #4a4a9a;
    border-left: none;
  }
`

const Canvas = styled.section`
  position: relative;
  flex: 1;
  display: flex;
  align-items: center;
  justify-content: center;
  padding-bottom: 14px;
`

const ViewCorner = styled.div`
  position: absolute;
  left: 11px;
  bottom: 2px;
  color: #24245c;
  font-family: Lato, sans-serif;
  font-size: 16px;
  font-weight: bold;
  line-height: 16px;
  svg { margin-bottom: 19px; }
`

const TaskPane = styled.div`
  display: flex;
  flex-direction: column;
  width: 28px;
  padding: 40px 0 0 3px;
`

const TaskTab = styled.button`
  display: flex;
  align-items: center;
  justify-content: center;
  height: 24px;
  border: 1px solid #77798f;
  border-right: none;
  border-radius: 4px 0 0 4px;
  background: ${p => (p.$active ? '#eceef6' : '#b6b9cd')};
`

const BottomTabs = styled.div`
  display: flex;
  height: 16px;
  padding-left: 3px;
  border-top: 1px solid #111;
  background: #e0e3ec;
  font-family: 'Liberation Sans', Arial, sans-serif;
  font-size: 12px;
`

const StepButton = styled.button`
  display: flex;
  align-items: center;
  justify-content: center;
  width: 16px;
  border: 1px solid #85879a;
  background: #b0b2c0;
`

const SheetTab = styled.button`
  padding: 0 ${p => (p.$active ? 8 : 13)}px 0 ${p => (p.$active ? 12 : 8)}px;
  border: 1px solid #444658;
  border-width: 0 1px 2px;
  background: ${p => (p.$active ? '#e0e2ec' : '#b8bbcf')};
  font-weight: ${p => (p.$active ? 'bold' : 'normal')};
`

const StatusBar = styled.footer`
  display: flex;
  align-items: center;
  height: 23px;
  padding: 0 15px 4px 2px;
  border-top: 1px solid #66697a;
  background: linear-gradient(#d8dae6, #bcbfce 60%, #a8aab6);
`

const StatusCells = styled.div`
  display: flex;
  align-items: center;
  margin-left: auto;
  gap: 3px;
  svg:first-of-type { margin: 0 46px 0 5px; }
`

const Tick = styled.i`
  width: 2px;
  height: 12px;
  margin-right: 3px;
  border-left: 1px solid #85879a;
  border-right: 1px solid #fff;
`

const TaskBar = styled.footer`
  display: flex;
  height: 30px;
  background: linear-gradient(#1c50c0, #3a80f0 8%, #2560dc 20%, #245edb 85%, #1a45a8);
`

const StartButton = styled.button`
  display: flex;
  align-items: center;
  gap: 5px;
  width: 97px;
  padding-left: 11px;
  border-radius: 0 12px 12px 0;
  background: linear-gradient(#2c702c, #5cb05c 10%, #3c963c 25%, #3a913a 80%, #286c28);
  color: #fff;
  font-family: 'Liberation Sans', Arial, sans-serif;
  font-size: 18px;
  font-style: italic;
  font-weight: bold;
  line-height: 20px;
  text-shadow: 1px 1px 2px #1c4c1c;
`

const AppButton = styled.button`
  display: flex;
  align-items: center;
  gap: 4px;
  width: 159px;
  height: 25px;
  margin: 3px 0 0 9px;
  padding-left: 9px;
  border-radius: 3px;
  background: linear-gradient(#5a9cff, #3c82f4 15%, #3a7ef0);
  color: #fff;
`

const Tray = styled.div`
  display: flex;
  align-items: center;
  gap: 2px;
  margin-left: auto;
  padding-right: 13px;
  border-left: 1px solid #0a3c9c;
  background: linear-gradient(#1278d8, #18a4f4 10%, #1090ec 25%, #0f8dea 85%, #0c60c0);
  color: #fff;
  time { margin-left: 4px; }
`

const TrayToggle = styled.button`
  display: flex;
  align-items: center;
  justify-content: center;
  width: 17px;
  height: 17px;
  margin-left: -9px;
  margin-right: 1px;
  border: 1px solid #9ccff8;
  border-radius: 50%;
  background: #1c78d8;
`

const menus = ['File', 'Edit', 'View', 'Insert', 'Tools', 'Window', 'Help'];

const quickTools = [
  { icon: 'newDoc', label: 'New' },
  { icon: 'open', label: 'Open' },
  { icon: 'save', label: 'Save' },
  { icon: 'print', label: 'Print' },
  { icon: 'undo', label: 'Undo' },
  { icon: 'cursor', label: 'Select', active: true },
  { icon: 'light', label: 'Rebuild', plain: true },
  { icon: 'options', label: 'Options' },
];

const ribbon = [
  [
    { big: 'Extruded\nBoss/Base', icon: 'extrude', w: 59 },
    { big: 'Revolved\nBoss/Base', icon: 'revolve', w: 59 },
    { w: 130, small: [['sweep', 'Swept Boss/Base'], ['loft', 'Lofted Boss/Base'], ['boundary', 'Boundary Boss/Base']] },
  ],
  [
    { big: 'Extruded\nCut', icon: 'extrudeCut', w: 46 },
    { big: 'Hole\nWizard', icon: 'hole', w: 50 },
    { big: 'Revolved\nCut', icon: 'revolveCut', w: 50 },
    { w: 99, small: [['sweepCut', 'Swept Cut'], ['loftCut', 'Lofted Cut'], ['boundaryCut', 'Boundary Cut']] },
  ],
  [
    { big: 'Fillet', icon: 'fillet', w: 26, menu: true },
    { big: 'Linear\nPattern', icon: 'pattern', w: 48, menu: true },
    { w: 59, small: [['rib', 'Rib'], ['draft', 'Draft'], ['shell', 'Shell']] },
    { w: 60, small: [['wrap', 'Wrap'], ['dome', 'Dome'], ['mirror', 'Mirror']] },
  ],
  [
    { big: 'Reference\nGeometry', icon: 'refGeometry', w: 54, menu: true },
    { big: 'Curves', icon: 'curves', w: 42, menu: true },
  ],
  [
    { big: 'Instant3D', icon: 'instant', w: 50 },
  ],
];

const featureTabs = ['Features', 'Sketch', 'Evaluate', 'DimXpert', 'Office Products'];

const viewTools = [
  ['zoomFit', 'Zoom to Fit'],
  ['zoomArea', 'Zoom to Area'],
  ['prevView', 'Previous View'],
  ['section', 'Section View'],
  ['orient', 'View Orientation', true],
  ['display', 'Display Style', true],
  ['glasses', 'Hide/Show Items', true],
  ['appearance', 'Edit Appearance'],
  ['scene', 'Apply Scene', true],
  ['viewSettings', 'View Settings', true],
];

const treeItems = [
  { icon: 'sensors', label: 'Sensors' },
  { icon: 'annotations', label: 'Annotations', expandable: true },
  { icon: 'material', label: 'Material <not specified>' },
  { icon: 'plane', label: 'Front Plane' },
  { icon: 'plane', label: 'Top Plane' },
  { icon: 'plane', label: 'Right Plane' },
  { icon: 'origin', label: 'Origin' },
  { icon: 'boss', label: 'Boss-Extrude1', expandable: true, selected: true },
];

const taskTabs = ['home', 'library', 'folder', 'palette', 'appearance', 'custom'];
const trayIcons = ['shield', 'acrobat', 'netOff', 'wireless', 'update', 'avast', 'trace'];

function Ribbon() {
  return (
    <RibbonBar>
      {ribbon.map((group, groupIndex) => (
        <Group key={groupIndex}>
          {group.map((item, itemIndex) => (
            item.big ? (
              <BigButton key={itemIndex} $w={item.w} $menu={item.menu}>
                <Icon name={item.icon} />
                {item.big}
                {item.menu && <Caret />}
              </BigButton>
            ) : (
              <SmallColumn key={itemIndex} $w={item.w}>
                {item.small.map(([icon, label]) => (
                  <SmallButton key={label}><Icon name={icon} />{label}</SmallButton>
                ))}
              </SmallColumn>
            )
          ))}
        </Group>
      ))}
      <DsLogo width="72" height="70" viewBox="0 0 72 70" fill="#d6ddeb">
        <path d="M22 3Q52-3 51 9 50 17 26 30 44 16 43 10 42 4 24 5z" />
        <path d="M7 36Q40 30 39 44 37 58 1 68L17 43l2 1L8 63Q30 55 31 45 31 37 8 39z" />
        <path d="M70 28Q52 25 52 32 52 36 61 42 68 47 65 54 60 66 32 60l3-2Q53 60 56 52 57 47 49 42 42 37 44 30 49 20 70 26z" />
      </DsLogo>
    </RibbonBar>
  )
}

function WinButtons() {
  return (
    <>
      <button aria-label="Minimize"><Icon name="min" /></button>
      <button aria-label="Restore"><Icon name="restore" /></button>
      <button aria-label="Close"><Icon name="close" /></button>
    </>
  )
}

function FeatureManager() {
  return (
    <SidePanel>
      <PanelTabs>
        {['part', 'property', 'config', 'dimx'].map((icon, i) => (
          <PanelTab key={icon} $active={i === 0} aria-label={icon}><Icon name={icon} /></PanelTab>
        ))}
        <More aria-label="Expand">»</More>
      </PanelTabs>
      <FilterBox>
        <Icon name="filter" size={14} />
        <input type="text" aria-label="Filter" />
      </FilterBox>
      <Tree>
        <TreeRoot><Icon name="part" />{'Part1  (Default<<Default>_Displa'}</TreeRoot>
        {treeItems.map(item => (
          <TreeItem key={item.label}>
            <Branch>{item.expandable && <Expander aria-label={`Expand ${item.label}`} />}</Branch>
            <Icon name={item.icon} />
            <TreeLabel $selected={item.selected}>{item.label}</TreeLabel>
          </TreeItem>
        ))}
      </Tree>
      <ScrollBar>
        <ScrollButton aria-label="Scroll left">
          <svg width="8" height="8" viewBox="0 0 8 8"><path d="M5.500 0.500L2 4l3.500 3.500" fill="none" stroke="#4d6185" strokeWidth="2" /></svg>
        </ScrollButton>
        <ScrollThumb />
        <ScrollButton aria-label="Scroll right">
          <svg width="8" height="8" viewBox="0 0 8 8"><path d="M2.500.5L6 4 2.500 7.500" fill="none" stroke="#4d6185" strokeWidth="2" /></svg>
        </ScrollButton>
      </ScrollBar>
      <PanelHandle aria-label="Collapse panel"><i /><i /><i /></PanelHandle>
    </SidePanel>
  )
}

function Model() {
  return (
    <svg width="336" height="476" viewBox="0 0 336 476" stroke="#000" strokeLinejoin="round">
      <path d="M.5 53.500L91.500 .5l243.500 140.500-91.500 52.500z" fill="#7b7d90" />
      <path d="M.5 53.500l243 140v281L.5 334.500z" fill="#5c5f6c" />
      <path d="M243.500 193.500l91.500-52.500v281l-91.500 52.500z" fill="#5c5f6c" />
    </svg>
  )
}

function Triad() {
  return (
    <svg width="58" height="56" viewBox="0 0 58 56" strokeLinecap="round">
      <path d="M29 35V18" stroke="#146018" strokeWidth="3" />
      <path d="M29 9l5 11q-5 2-10 0z" fill="#1c7a20" />
      <path d="M29 36l14 7" stroke="#b01414" strokeWidth="3" />
      <path d="M52 48l-11-1q0-5 3-8z" fill="#d42020" />
      <path d="M29 36l-14 7" stroke="#1414a8" strokeWidth="3" />
      <path d="M6 48l11-1q0-5-3-8z" fill="#2828d8" />
      <path d="M25.500 1.500l3.500 4 3.500-4M29 5.500v4" fill="none" stroke="#108818" />
      <path d="M50.500 45.500l5 8M55.500 45.500l-5 8" stroke="#e81818" />
      <path d="M2.500 45.500h4.500l-4.500 8h4.500" fill="none" stroke="#1818d8" />
    </svg>
  )
}

export default function App() {
  return (
    <Page>
      <GlobalStyle />
      <TitleBar>
        <Brand><Icon name="sw" size={20} /><span><b>Solid</b>Works</span></Brand>
        <MenuBar>
          {menus.map(menu => <button key={menu}>{menu}</button>)}
          <Icon name="pin" size={14} />
        </MenuBar>
        <QuickBar>
          {quickTools.map(tool => (
            <QuickButton key={tool.icon} $plain={tool.plain} $active={tool.active} aria-label={tool.label}>
              <Icon name={tool.icon} />
              {!tool.plain && <Caret />}
            </QuickButton>
          ))}
        </QuickBar>
        <DocTitle>Part1 *</DocTitle>
        <WindowButtons>
          <button aria-label="Help"><Icon name="help" size={14} /></button>
          <Caret />
          <WinButtons />
        </WindowButtons>
      </TitleBar>
      <Ribbon />
      <TabRow>
        <FeatureTabs>
          {featureTabs.map((tab, i) => <FeatureTab key={tab} $active={i === 0}>{tab}</FeatureTab>)}
        </FeatureTabs>
        <ViewTools>
          {viewTools.map(([icon, label, menu]) => (
            <ViewButton key={icon} $menu={menu} aria-label={label}>
              <Icon name={icon} />
              {menu && <Caret />}
            </ViewButton>
          ))}
        </ViewTools>
        <DocButtons $pad={10}><WinButtons /></DocButtons>
      </TabRow>
      <Workspace>
        <FeatureManager />
        <Canvas>
          <Model />
          <ViewCorner><Triad />*Isometric</ViewCorner>
        </Canvas>
        <TaskPane>
          {taskTabs.map(icon => (
            <TaskTab key={icon} $active={icon === 'appearance'} aria-label={icon}><Icon name={icon} /></TaskTab>
          ))}
        </TaskPane>
      </Workspace>
      <BottomTabs>
        {['M2 1v8M8 1L4 5l4 4z', 'M7 1L3 5l4 4z', 'M3 1l4 4-4 4z', 'M8 1v8M2 1l4 4-4 4z'].map(d => (
          <StepButton key={d} aria-label="Step">
            <svg width="10" height="10" viewBox="0 0 10 10"><path d={d} fill="#85879a" stroke="#85879a" /></svg>
          </StepButton>
        ))}
        <SheetTab $active>Model</SheetTab>
        <SheetTab>Motion Study 1</SheetTab>
      </BottomTabs>
      <StatusBar>
        SolidWorks Education Edition - Instructional Use Only
        <StatusCells>
          <Tick /><Tick />
          Editing Part
          <Tick /><Tick /><Tick />
          <Icon name="helpBox" size={14} />
          <Icon name="tag" />
        </StatusCells>
      </StatusBar>
      <TaskBar>
        <StartButton><Icon name="flag" size={18} />start</StartButton>
        <AppButton><Icon name="sw" />SolidWorks Education...</AppButton>
        <Tray>
          <TrayToggle aria-label="Show hidden icons">
            <svg width="8" height="8" viewBox="0 0 8 8"><path d="M5.500.5L2 4l3.500 3.500" fill="none" stroke="#fff" strokeWidth="2" /></svg>
          </TrayToggle>
          {trayIcons.map(icon => <Icon key={icon} name={icon} />)}
          <time>10:57 PM</time>
        </Tray>
      </TaskBar>
    </Page>
  )
}
